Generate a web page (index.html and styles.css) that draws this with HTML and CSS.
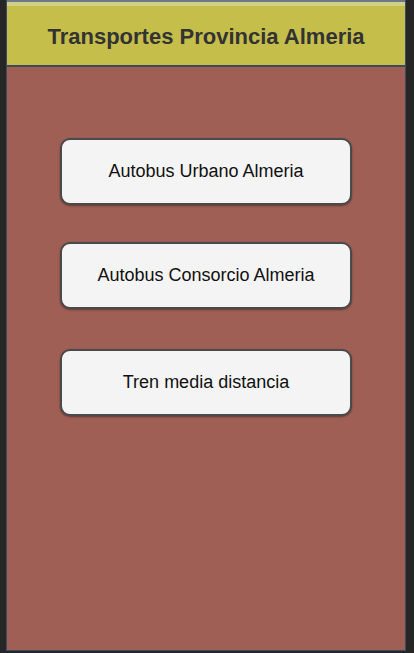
FILE: index.html
```html
<!DOCTYPE html>
<html lang="es">
<head>
    <meta charset="UTF-8">
    <meta name="viewport" content="width=device-width, initial-scale=1.0">
    <title>Transportes Provincia Almeria</title>
    <link rel="stylesheet" href="styles.css">
</head>
<body>
    <div class="screen">
        <div class="topbar"></div>
        <header class="header">
            <h1>Transportes Provincia Almeria</h1>
        </header>
        <main class="content">
            <button type="button" class="button">Autobus Urbano Almeria</button>
            <button type="button" class="button">Autobus Consorcio Almeria</button>
            <button type="button" class="button">Tren media distancia</button>
        </main>
    </div>
</body>
</html>
```

FILE: styles.css
```css
html, body {
    height: 100%;
}
body {
    margin: 0;
    background-color: #262626;
    font-family: 'Liberation Sans', Arial, sans-serif;
}
.screen {
    width: 400px;
    height: 651px;
    margin-left: 6px;
    border-left: 1px solid #3b4a66;
    border-right: 1px solid #3b4a66;
    border-bottom: 1px solid #3b4a66;
    display: flex;
    flex-direction: column;
    box-sizing: border-box;
}
.topbar {
    height: 2px;
    background-color: #6b7889;
}
.header {
    height: 65px;
    background-color: #c5be4b;
    border-top: 4px solid #d4cf86;
    border-bottom: 2px solid #3c4a5c;
    box-sizing: border-box;
    display: flex;
    align-items: center;
    justify-content: center;
}
.header h1 {
    margin: 0;
    padding-top: 2px;
    font-size: 22px;
    font-weight: bold;
    color: #333333;
}
.content {
    flex: 1;
    background-color: #9f5f55;
    display: flex;
    flex-direction: column;
    align-items: center;
    gap: 37px;
    padding-top: 71px;
}
.button {
    width: 292px;
    height: 67px;
    background-color: #f4f4f4;
    border: 2px solid #4a4a4a;
    border-radius: 10px;
    box-shadow: 0 1px 2px rgba(0, 0, 0, 0.4);
    font-family: 'Liberation Sans', Arial, sans-serif;
    font-size: 18px;
    color: #111111;
    cursor: pointer;
}
.button:nth-child(3) {
    margin-top: 3px;
}
```
